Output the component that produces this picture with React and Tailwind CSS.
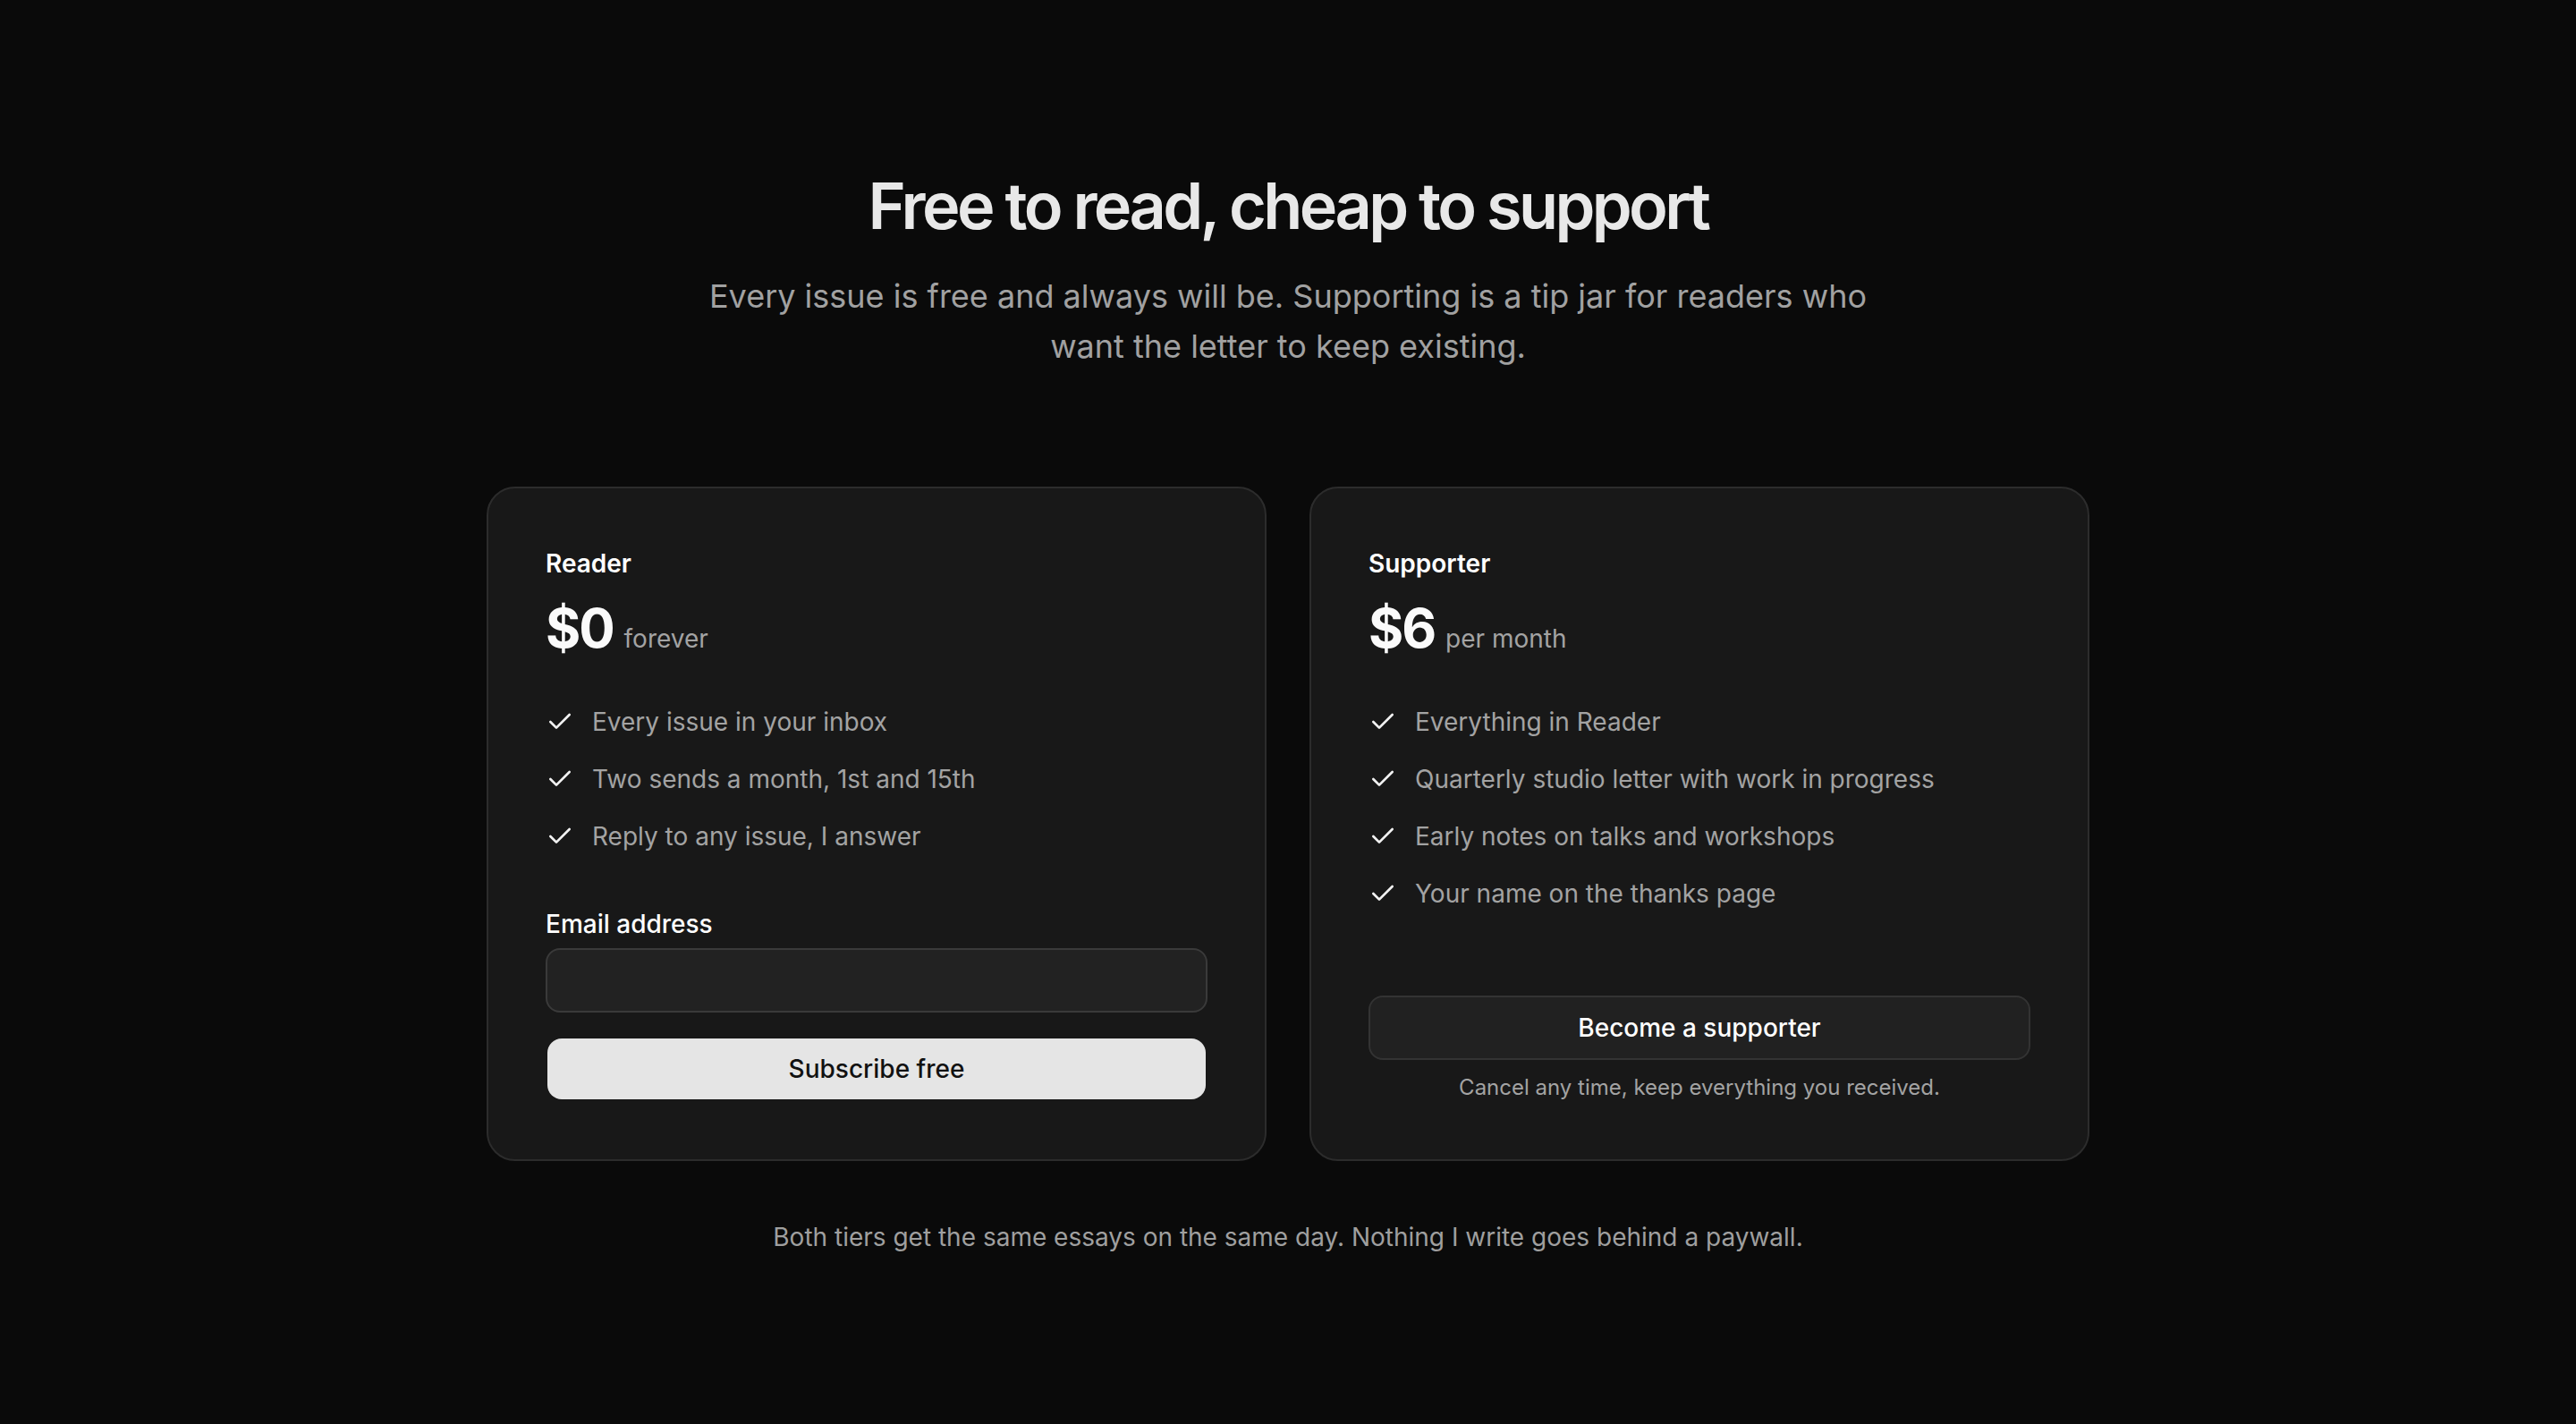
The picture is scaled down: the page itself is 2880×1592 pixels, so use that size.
import React from 'react';

function CheckIcon() {
  return (
    <svg
      width="32"
      height="32"
      viewBox="0 0 24 24"
      fill="none"
      stroke="currentColor"
      strokeWidth="2"
      strokeLinecap="round"
      strokeLinejoin="round"
      className="shrink-0 text-[#f2f2f2]"
    >
      <path d="M20 6 9 17l-5-5" />
    </svg>
  );
}

function FeatureList({ items }) {
  return (
    <ul className="mt-[53px] flex flex-col gap-[24px]">
      {items.map((item) => (
        <li key={item} className="flex items-center h-[40px]">
          <CheckIcon />
          <span className="ml-[20px] text-[28px] leading-[40px] text-[#a3a3a3]">{item}</span>
        </li>
      ))}
    </ul>
  );
}

function PriceHeader({ name, price, period }) {
  return (
    <div>
      <div className="text-[28px] leading-[40px] font-semibold text-white">{name}</div>
      <div className="mt-[22px] flex items-baseline">
        <span className="text-[60px] leading-[60px] font-bold tracking-[-0.035em] text-[#fafafa]">{price}</span>
        <span className="ml-[12px] text-[28px] leading-[40px] text-[#a3a3a3]">{period}</span>
      </div>
    </div>
  );
}

export default function App() {
  const [email, setEmail] = React.useState('');

  return (
    <div className="min-h-screen w-full bg-[#0a0a0a] font-[Inter,sans-serif] antialiased">
      <div className="pt-[190px] flex flex-col items-center">
        <h1 className="text-[72px] leading-[80px] font-semibold tracking-[-0.05em] text-[#e8e8e8] text-center">
          Free to read, cheap to support
        </h1>
        <p className="mt-[33px] max-w-[1344px] text-center text-[36px] leading-[56px] text-[#a1a1a1]">
          Every issue is free and always will be. Supporting is a tip jar for readers who want the letter to keep existing.
        </p>
      </div>

      <div className="mx-auto mt-[129px] w-[1792px] grid grid-cols-2 gap-[48px]">
        {/* Reader */}
        <div className="rounded-[32px] border-2 border-[#2c2c2c] bg-[#181818] p-[64px] flex flex-col">
          <PriceHeader name="Reader" price="$0" period="forever" />
          <FeatureList
            items={['Every issue in your inbox', 'Two sends a month, 1st and 15th', 'Reply to any issue, I answer']}
          />
          <label className="mt-[58px] block text-[28px] leading-[40px] font-medium text-white">Email address</label>
          <input
            type="email"
            value={email}
            onChange={(e) => setEmail(e.target.value)}
            className="mt-[7px] h-[72px] w-full rounded-[16px] border-2 border-[#3a3a3a] bg-[#222222] px-[24px] text-[28px] text-white outline-none"
          />
          <button
            type="button"
            className="mt-[29px] mx-[2px] mb-[3px] h-[68px] rounded-[16px] bg-[#e5e5e5] text-[28px] font-medium text-[#111111]"
          >
            Subscribe free
          </button>
        </div>

        {/* Supporter */}
        <div className="rounded-[32px] border-2 border-[#2c2c2c] bg-[#181818] p-[64px] flex flex-col">
          <PriceHeader name="Supporter" price="$6" period="per month" />
          <FeatureList
            items={[
              'Everything in Reader',
              'Quarterly studio letter with work in progress',
              'Early notes on talks and workshops',
              'Your name on the thanks page',
            ]}
          />
          <div className="mt-auto">
            <button
              type="button"
              className="h-[72px] w-full rounded-[16px] border-2 border-[#333333] bg-[#212121] text-[28px] font-medium text-white"
            >
              Become a supporter
            </button>
            <p className="mt-[15px] text-center text-[24px] leading-[32px] text-[#a3a3a3]">
              Cancel any time, keep everything you received.
            </p>
          </div>
        </div>
      </div>

      <p className="mt-[65px] text-center text-[28px] leading-[40px] text-[#9f9f9f]">
        Both tiers get the same essays on the same day. Nothing I write goes behind a paywall.
      </p>
    </div>
  );
}
